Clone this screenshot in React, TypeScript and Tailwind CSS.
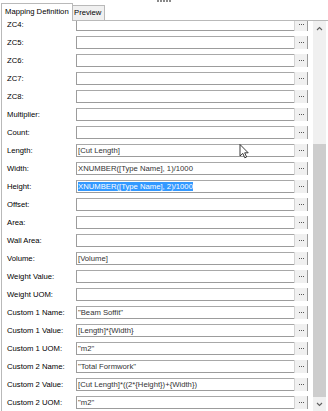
import React from "react";

type Row = { label: string; value?: string; selected?: boolean };

const rows: Row[] = [
  { label: "ZC4:" },
  { label: "ZC5:" },
  { label: "ZC6:" },
  { label: "ZC7:" },
  { label: "ZC8:" },
  { label: "Multiplier:" },
  { label: "Count:" },
  { label: "Length:", value: "[Cut Length]" },
  { label: "Width:", value: "XNUMBER([Type Name], 1)/1000" },
  { label: "Height:", value: "XNUMBER([Type Name], 2)/1000", selected: true },
  { label: "Offset:" },
  { label: "Area:" },
  { label: "Wall Area:" },
  { label: "Volume:", value: "[Volume]" },
  { label: "Weight Value:" },
  { label: "Weight UOM:" },
  { label: "Custom 1 Name:", value: '"Beam Soffit"' },
  { label: "Custom 1 Value:", value: "[Length]*{Width}" },
  { label: "Custom 1 UOM:", value: '"m2"' },
  { label: "Custom 2 Name:", value: '"Total Formwork"' },
  { label: "Custom 2 Value:", value: "[Cut Length]*((2*{Height})+{Width})" },
  { label: "Custom 2 UOM:", value: '"m2"' },
];

function Dots() {
  return (
    <div className="flex h-[13px] w-[13px] items-center justify-center gap-[1px] border-l border-[#d4d4d4] bg-[#f0f0f0]">
      <span className="h-[1px] w-[1px] bg-[#555]" />
      <span className="h-[1px] w-[1px] bg-[#555]" />
      <span className="h-[1px] w-[1px] bg-[#555]" />
    </div>
  );
}

function FieldRow({ row }: { row: Row }) {
  return (
    <div className="flex h-[18px] items-start pt-[2px]">
      <div className="flex h-[13px] w-[74px] shrink-0 items-center pl-[5px] text-[#000]">{row.label}</div>
      <div className="flex h-[13px] w-[232px] shrink-0 border border-[#9c9c9c] border-t-[#a8a8a8] bg-white">
        <div className="flex h-full flex-1 items-center overflow-hidden whitespace-nowrap pl-[1px] text-[#333]">
          {row.value ? (
            row.selected ? (
              <span className="bg-[#3399ff] leading-[9px] text-white">{row.value}</span>
            ) : (
              <span>{row.value}</span>
            )
          ) : null}
        </div>
        <div className="-mt-px -mb-px">
          <Dots />
        </div>
      </div>
    </div>
  );
}

function Chevron({ up }: { up: boolean }) {
  return (
    <svg width="7" height="5" viewBox="0 0 7 5">
      <polyline
        points={up ? "1,4 3.5,1.5 6,4" : "1,1 3.5,3.5 6,1"}
        fill="none"
        stroke="#606060"
        strokeWidth="1.1"
      />
    </svg>
  );
}

export default function App() {
  return (
    <div className="relative flex h-[411px] w-[328px] flex-col overflow-hidden bg-white font-['Liberation_Sans',Arial,sans-serif] text-[7.7px]">
      {/* splitter grip */}
      <div className="flex h-[3px] shrink-0 items-start pl-[157px]">
        <div className="flex gap-[1px]">
          {[0, 1, 2, 3, 4].map((i) => (
            <span key={i} className="h-[2px] w-[2px] bg-[#8a8a8a]" />
          ))}
        </div>
      </div>

      {/* tabs */}
      <div className="flex h-[17px] shrink-0 items-end pl-[1px]">
        <div className="relative z-10 -mb-px flex h-[18px] w-[72px] items-center border-l border-r border-t border-[#b9b9b9] bg-white pl-[3px] pb-[2px] text-[#000]">
          Mapping Definition
        </div>
        <div className="flex h-[15px] w-[32px] items-center border-r border-t border-[#b9b9b9] bg-[#f0f0f0] pl-[1px] text-[#000]">
          Preview
        </div>
      </div>

      {/* panel */}
      <div className="ml-[1px] flex min-h-0 flex-1 border-l border-t border-[#b9b9b9]">
        <div className="w-[311px] shrink-0 overflow-hidden">
          <div className="-mt-[5px]">
            {rows.map((r) => (
              <FieldRow key={r.label} row={r} />
            ))}
          </div>
        </div>
        <div className="flex w-[13px] shrink-0 flex-col bg-[#f0f0f0]">
          <div className="flex h-[14px] shrink-0 items-center justify-center">
            <Chevron up />
          </div>
          <div className="flex-1 pt-[109px]">
            <div className="h-[253px] bg-[#cdcdcd]" />
          </div>
          <div className="flex h-[14px] shrink-0 items-center justify-center">
            <Chevron up={false} />
          </div>
        </div>
        <div className="w-[2px] shrink-0" />
      </div>

      {/* mouse cursor */}
      <svg
        className="absolute left-[239px] top-[144px]"
        width="12"
        height="15"
        viewBox="0 0 12 15"
      >
        <path
          d="M1 0.5 L1 12 L3.8 9.4 L5.8 13.8 L7.6 13 L5.7 8.8 L9.2 8.8 Z"
          fill="white"
          stroke="#222"
          strokeWidth="0.9"
          strokeLinejoin="round"
        />
      </svg>
    </div>
  );
}
